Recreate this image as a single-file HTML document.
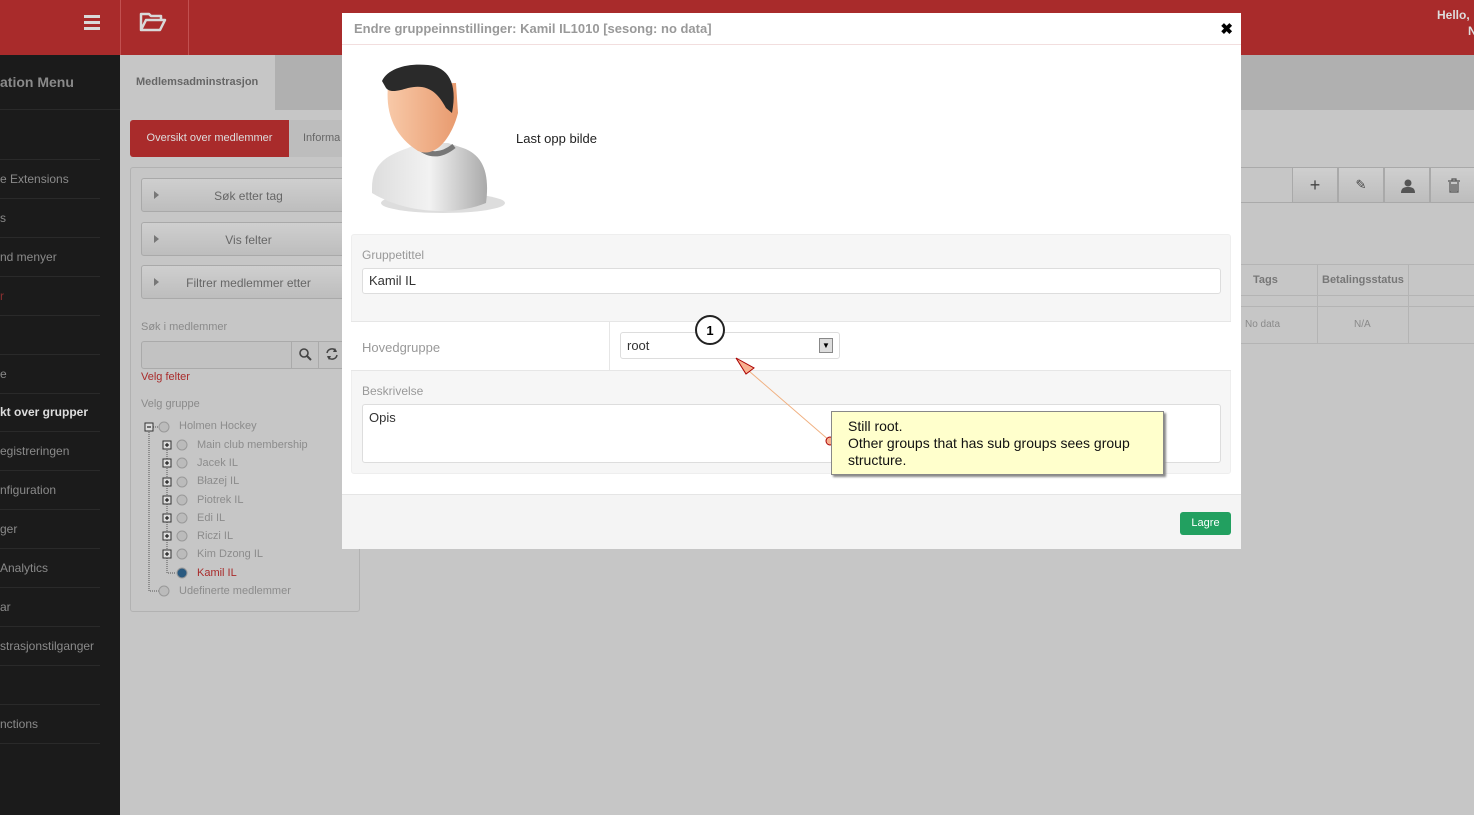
<!DOCTYPE html>
<html><head><meta charset="utf-8"><style>
*{box-sizing:border-box;margin:0;padding:0}
body{width:1474px;height:815px;overflow:hidden;position:relative;font-family:"Liberation Sans",sans-serif;background:#c6c6c6}
.abs{position:absolute}
.hdr{left:0;top:0;width:1474px;height:55px;background:#a92b2b}
.side{left:0;top:55px;width:120px;height:760px;background:#1b1b1b}
.side div{position:absolute;left:0;width:100px;border-bottom:1px solid #2a2a2a;color:#8a8a8a;font-size:12px;white-space:nowrap;height:39px;line-height:39px;}
.t{color:#8a8a8a;font-size:11px;white-space:nowrap}
.btn{background:linear-gradient(#cfcfcf,#bdbdbd);border:1px solid #a9a9a9;border-radius:3px}
.tree div{position:absolute;font-size:11px;color:#8c8c8c;white-space:nowrap}
.modal{left:342px;top:13px;width:899px;height:536px;background:#fff}
.lbl{font-size:12px;color:#999}
.inp{background:#fff;border:1px solid #ddd;border-radius:3px;font-size:13px;color:#333;padding-left:6px}
.arr{position:absolute;left:12px;top:12px;width:0;height:0;border-left:5px solid #777;border-top:4px solid transparent;border-bottom:4px solid transparent}
</style></head><body>
<div class="abs hdr"></div>
<div class="abs" style="left:120px;top:0;width:1px;height:55px;background:#c25050"></div>
<div class="abs" style="left:188px;top:0;width:1px;height:55px;background:#c25050"></div>
<div class="abs" style="left:84px;top:15px;width:16px;height:3px;background:#d9d9d9;box-shadow:0 6px 0 #d9d9d9,0 12px 0 #d9d9d9"></div>
<svg class="abs" style="left:139px;top:11px" width="28" height="22" viewBox="0 0 28 22"><path d="M2 3h8l2 2h10v4H7L2 19z M2 19L7 9h19l-5 10z" fill="none" stroke="#d9d9d9" stroke-width="2.5" stroke-linejoin="round"/></svg>
<div class="abs" style="left:1437px;top:8px;color:#ddd;font-size:12px;font-weight:bold">Hello,</div>
<div class="abs" style="left:1468px;top:24px;color:#ddd;font-size:12px;font-weight:bold">N</div>
<div class="abs side">
<div style="top:0;height:55px;line-height:55px;font-size:14px;font-weight:bold;color:#8a8a8a;width:120px">ation Menu</div>
<div style="top:65px;height:40px"></div>
<div style="top:105px">e Extensions</div>
<div style="top:144px">s</div>
<div style="top:183px">nd menyer</div>
<div style="top:222px;color:#8a3030">r</div>
<div style="top:261px"></div>
<div style="top:300px">e</div>
<div style="top:338px;color:#ddd;font-weight:bold">kt over grupper</div>
<div style="top:377px">egistreringen</div>
<div style="top:416px">nfiguration</div>
<div style="top:455px">ger</div>
<div style="top:494px">Analytics</div>
<div style="top:533px">ar</div>
<div style="top:572px">strasjonstilganger</div>
<div style="top:611px"></div>
<div style="top:650px">nctions</div>
</div>
<div class="abs" style="left:120px;top:55px;width:1354px;height:55px;background:#b0b0b0"></div>
<div class="abs" style="left:120px;top:55px;width:155px;height:55px;background:#c6c6c6;font-size:11px;font-weight:bold;color:#666;line-height:55px;padding-left:16px">Medlemsadminstrasjon</div>
<div class="abs" style="left:130px;top:120px;width:159px;height:37px;background:#a92b2b;border-radius:3px 0 0 3px;color:#ddd;font-size:11px;line-height:37px;text-align:center">Oversikt over medlemmer</div>
<div class="abs" style="left:289px;top:120px;width:60px;height:37px;background:#bdbdbd;color:#666;font-size:11px;line-height:37px;padding-left:14px">Informa</div>
<div class="abs" style="left:130px;top:167px;width:230px;height:445px;border:1px solid #b2b2b2;border-radius:3px"></div>
<div class="abs btn" style="left:141px;top:178px;width:215px;height:34px;text-align:center;line-height:34px;font-size:12px;color:#666"><span class="arr"></span>Søk etter tag</div>
<div class="abs btn" style="left:141px;top:222px;width:215px;height:34px;text-align:center;line-height:34px;font-size:12px;color:#666"><span class="arr"></span>Vis felter</div>
<div class="abs btn" style="left:141px;top:265px;width:215px;height:34px;text-align:center;line-height:34px;font-size:12px;color:#666"><span class="arr"></span>Filtrer medlemmer etter</div>
<div class="abs t" style="left:141px;top:321px">Søk i medlemmer</div>
<div class="abs" style="left:141px;top:341px;width:210px;height:28px;border:1px solid #aaa;border-radius:3px;background:#c2c2c2"></div>
<div class="abs" style="left:291px;top:342px;width:1px;height:26px;background:#aaa"></div>
<div class="abs" style="left:318px;top:342px;width:1px;height:26px;background:#aaa"></div>
<svg class="abs" style="left:298px;top:347px" width="14" height="14"><circle cx="6" cy="6" r="4" fill="none" stroke="#444" stroke-width="1.6"/><path d="M9 9l4 4" stroke="#444" stroke-width="2"/></svg>
<svg class="abs" style="left:325px;top:347px" width="14" height="14"><path d="M2 6A5 5 0 0 1 11 4M12 8A5 5 0 0 1 3 10" fill="none" stroke="#444" stroke-width="1.5"/><path d="M10 1l2 4-4 0z M4 13l-2-4 4 0z" fill="#444"/></svg>
<div class="abs" style="left:141px;top:371px;font-size:11px;color:#a92b2b">Velg felter</div>
<div class="abs t" style="left:141px;top:398px">Velg gruppe</div>
<div class="tree">
<div style="left:179px;top:420px">Holmen Hockey</div>
<div style="left:197px;top:439px">Main club membership</div>
<div style="left:197px;top:457px">Jacek IL</div>
<div style="left:197px;top:475px">Błazej IL</div>
<div style="left:197px;top:494px">Piotrek IL</div>
<div style="left:197px;top:512px">Edi IL</div>
<div style="left:197px;top:530px">Riczi IL</div>
<div style="left:197px;top:548px">Kim Dzong IL</div>
<div style="left:197px;top:567px;color:#a92b2b">Kamil IL</div>
<div style="left:179px;top:585px">Udefinerte medlemmer</div>
</div>
<svg class="abs" style="left:140px;top:418px" width="60" height="180">
<g fill="none" stroke="#555" stroke-dasharray="1 1">
<path d="M9 12V173H20 M27 28V155H36 M13 9H20"/>
</g>
<g fill="#bbb" stroke="#999"><circle cx="24" cy="9" r="5"/><circle cx="24" cy="173" r="5"/>
<circle cx="42" cy="27" r="5"/><circle cx="42" cy="45" r="5"/><circle cx="42" cy="64" r="5"/><circle cx="42" cy="82" r="5"/><circle cx="42" cy="100" r="5"/><circle cx="42" cy="118" r="5"/><circle cx="42" cy="136" r="5"/></g>
<circle cx="42" cy="155" r="5" fill="#2a5a80" stroke="#999"/>
<g fill="#ddd" stroke="#333"><rect x="5" y="5" width="8" height="8"/></g><path d="M7 9h4" stroke="#000"/>
<g stroke="#333" fill="#ddd"><rect x="23" y="23" width="8" height="8"/><rect x="23" y="41" width="8" height="8"/><rect x="23" y="60" width="8" height="8"/><rect x="23" y="78" width="8" height="8"/><rect x="23" y="96" width="8" height="8"/><rect x="23" y="114" width="8" height="8"/><rect x="23" y="132" width="8" height="8"/></g>
<g stroke="#000"><path d="M25 27h4M27 25v4M25 45h4M27 43v4M25 64h4M27 62v4M25 82h4M27 80v4M25 100h4M27 98v4M25 118h4M27 116v4M25 136h4M27 134v4"/></g>
</svg>
<div class="abs" style="left:1241px;top:167px;width:233px;height:36px;border-top:1px solid #aaa;border-bottom:1px solid #aaa"></div>
<div class="abs btn" style="left:1292px;top:167px;width:46px;height:36px;border-radius:0;text-align:center;line-height:34px;color:#444;font-size:18px">+</div>
<div class="abs btn" style="left:1338px;top:167px;width:46px;height:36px;border-radius:0;text-align:center;line-height:34px;color:#444;font-size:13px">✎</div>
<div class="abs btn" style="left:1384px;top:167px;width:46px;height:36px;border-radius:0"><svg style="margin:11px 16px" width="14" height="14"><circle cx="7" cy="4" r="3.5" fill="#555"/><path d="M0 14c0-5 3-6 7-6s7 1 7 6z" fill="#555"/></svg></div>
<div class="abs btn" style="left:1430px;top:167px;width:46px;height:36px;border-radius:0"><svg style="margin:10px 16px" width="14" height="15"><path d="M1 3h12M5 3V1h4v2M3 4v10h8V4M5 6v7M7 6v7M9 6v7" fill="none" stroke="#555" stroke-width="1.2"/></svg></div>
<div class="abs" style="left:1241px;top:264px;width:233px;height:32px;border-top:1px solid #b4b4b4;border-bottom:1px solid #b4b4b4"></div>
<div class="abs" style="left:1317px;top:264px;width:1px;height:80px;background:#b4b4b4"></div>
<div class="abs" style="left:1408px;top:264px;width:1px;height:80px;background:#b4b4b4"></div>
<div class="abs" style="left:1253px;top:274px;font-size:11px;color:#777;font-weight:bold">Tags</div>
<div class="abs" style="left:1322px;top:274px;font-size:11px;color:#777;font-weight:bold">Betalingsstatus</div>
<div class="abs" style="left:1241px;top:306px;width:233px;height:38px;border-top:1px solid #b4b4b4;border-bottom:1px solid #b4b4b4"></div>
<div class="abs t" style="left:1245px;top:319px;font-size:10px">No data</div>
<div class="abs t" style="left:1354px;top:319px;font-size:10px">N/A</div>

<div class="abs modal">
<div class="abs" style="left:0;top:0;width:899px;height:32px;border-bottom:1px solid #f2dede;padding:8px 12px;font-size:13px;font-weight:bold;color:#999">Endre gruppeinnstillinger: Kamil IL1010 [sesong: no data]</div>
<div class="abs" style="right:8px;top:7px;font-size:15px;font-weight:bold;color:#000">✖</div>
<svg class="abs" style="left:26px;top:50px" width="140" height="155" viewBox="0 0 140 155">
<defs><linearGradient id="f" x1="0" x2="1"><stop offset="0" stop-color="#f8c9a8"/><stop offset="1" stop-color="#e89a6e"/></linearGradient>
<linearGradient id="s" x1="0" x2="1"><stop offset="0" stop-color="#ddd"/><stop offset=".5" stop-color="#f2f2f2"/><stop offset="1" stop-color="#aaa"/></linearGradient></defs>
<ellipse cx="75" cy="140" rx="62" ry="10" fill="#ddd"/>
<path d="M4 125C4 100 20 92 40 85L50 80H80L95 85C115 92 122 110 118 140C90 152 40 152 4 130Z" fill="url(#s)"/>
<path d="M46 80Q65 100 86 83" fill="none" stroke="#777" stroke-width="5"/>
<path d="M20 22C18 45 22 70 50 88C70 96 85 70 90 50L88 20Z" fill="url(#f)"/>
<path d="M14 18C20 5 40 0 60 2C80 4 90 20 84 50L78 45C70 30 60 20 40 25C30 28 22 30 18 25Z" fill="#2a2a2a"/>
</svg>
<div class="abs" style="left:174px;top:118px;font-size:13px;color:#222">Last opp bilde</div>
<div class="abs" style="left:9px;top:221px;width:880px;height:240px;background:#f6f6f6;border:1px solid #eee;border-radius:3px"></div>
<div class="abs lbl" style="left:20px;top:235px">Gruppetittel</div>
<div class="abs inp" style="left:20px;top:255px;width:859px;height:26px;line-height:24px">Kamil IL</div>
<div class="abs" style="left:9px;top:308px;width:880px;height:50px;background:#fff;border-top:1px solid #e6e6e6;border-bottom:1px solid #e6e6e6"></div>
<div class="abs" style="left:267px;top:308px;width:1px;height:50px;background:#e6e6e6"></div>
<div class="abs lbl" style="left:20px;top:327px;font-size:13px">Hovedgruppe</div>
<div class="abs inp" style="left:278px;top:319px;width:220px;height:27px;line-height:26px">root</div>
<div class="abs" style="left:477px;top:325px;width:14px;height:15px;border:1px solid #888;background:#ddd;font-size:8px;text-align:center;line-height:14px">▼</div>
<div class="abs lbl" style="left:20px;top:371px">Beskrivelse</div>
<div class="abs inp" style="left:20px;top:391px;width:859px;height:59px;padding-top:5px">Opis</div>
<div class="abs" style="left:0;top:481px;width:899px;height:55px;background:#f4f4f4;border-top:1px solid #e5e5e5"></div>
<div class="abs" style="left:838px;top:499px;width:51px;height:23px;background:#22a060;border-radius:3px;color:#fff;font-size:11px;text-align:center;line-height:23px">Lagre</div>
</div>
<svg class="abs" style="left:690px;top:310px" width="150" height="140">
<line x1="52" y1="55" x2="140" y2="131" stroke="#f0b080"/>
<path d="M46 48L64 58L56 64Z" fill="#f8b090" stroke="#a00"/>
<circle cx="140" cy="131" r="4" fill="#f8b090" stroke="#a00"/>
<circle cx="20" cy="20" r="14" fill="#fff" stroke="#222" stroke-width="2"/>
<text x="20" y="25" text-anchor="middle" font-size="13" font-weight="bold" font-family="Liberation Sans">1</text>
</svg>
<div class="abs" style="left:831px;top:411px;width:333px;height:64px;background:#ffffcc;border:1px solid #888;box-shadow:2px 2px 2px #888;padding:6px 16px;font-size:14px;line-height:17px;color:#111">Still root.<br>Other groups that has sub groups sees group structure.</div>
</body></html>
